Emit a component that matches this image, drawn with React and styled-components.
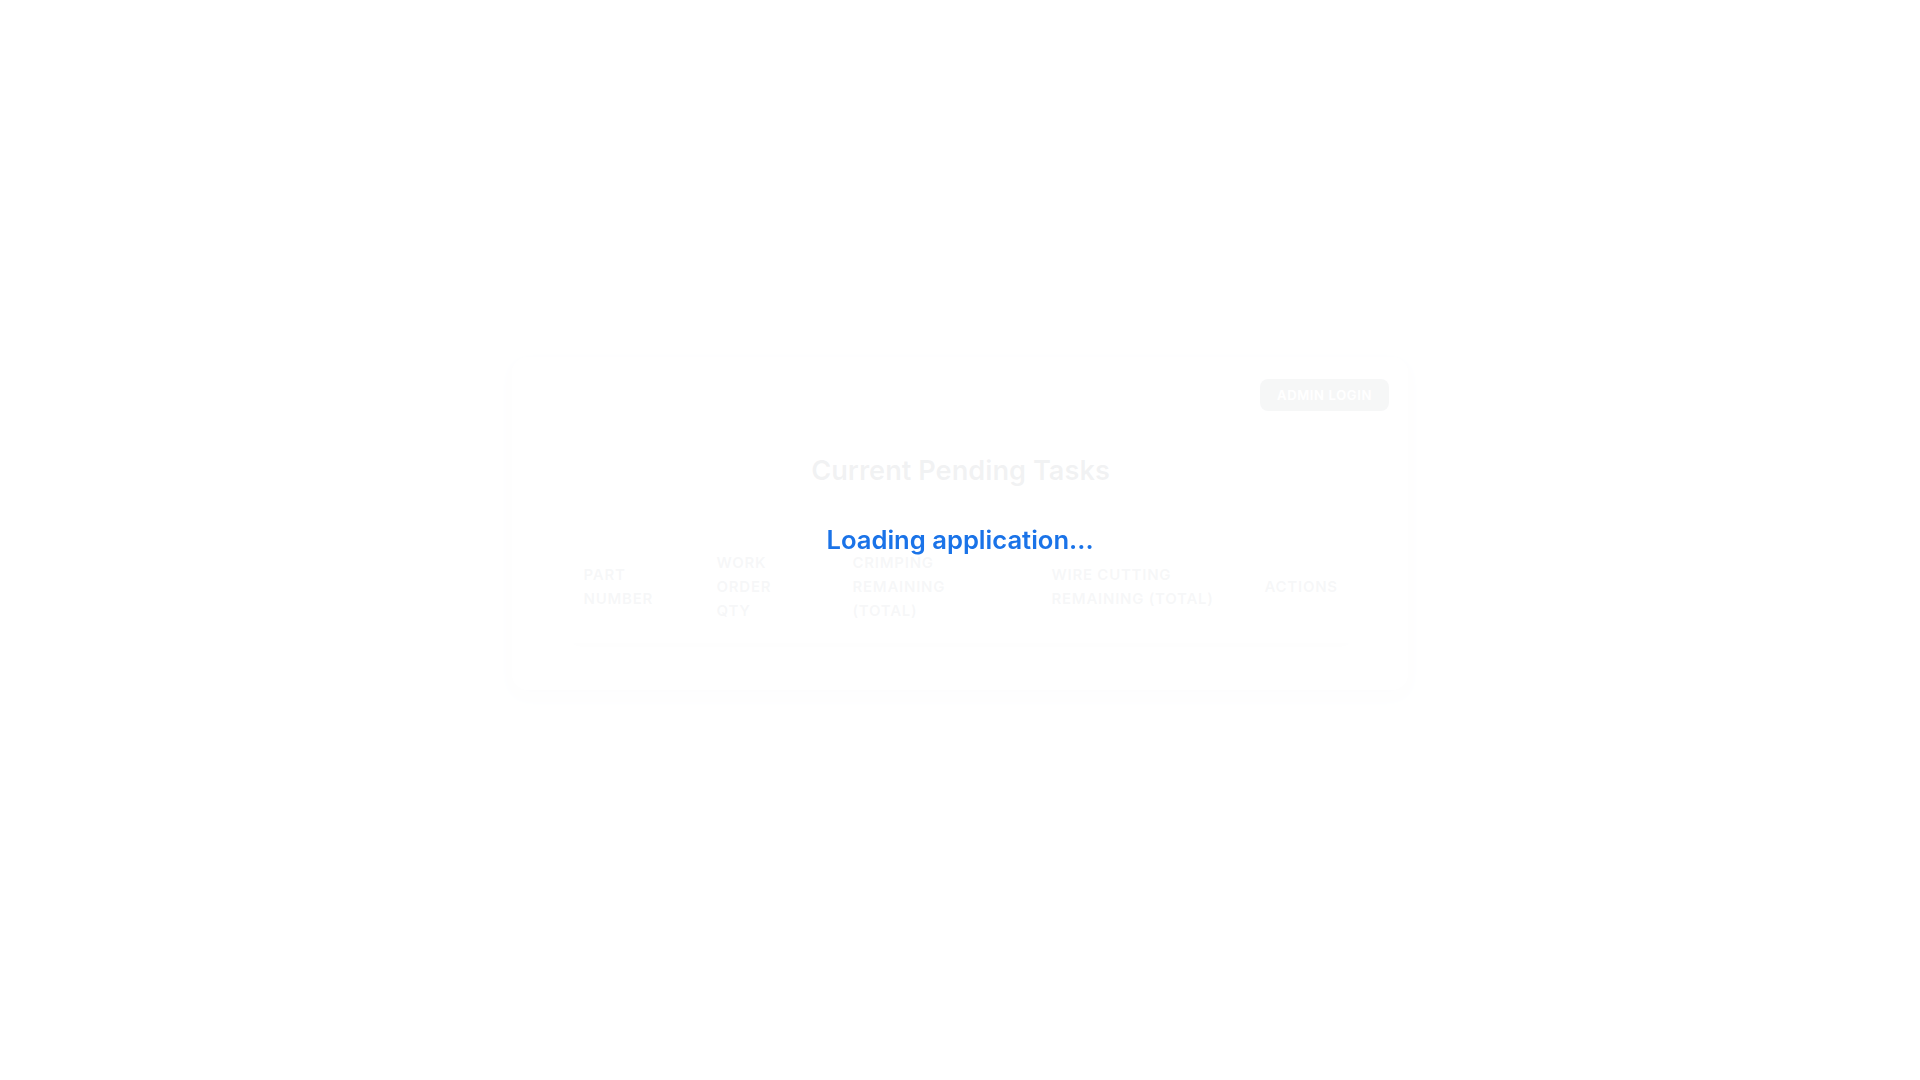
import React from "react";
import styled, { createGlobalStyle } from "styled-components";

const GlobalStyle = createGlobalStyle`
    html, body {
        margin: 0;
        padding: 0;
        background: #f3f4f6;
        font-family: Inter, "Noto Sans", "Liberation Sans", sans-serif;
    }
    * {
        box-sizing: border-box;
    }
`;

const Page = styled.div`
    min-height: 100vh;
    padding: 357px 20px 40px;
`;

const Card = styled.div`
    max-width: 896px;
    margin: 0 auto;
    background: #ffffff;
    border-radius: 16px;
    box-shadow: 0 6px 16px rgba(0, 0, 0, 0.12);
    padding: 22px 19px 45px 20px;
`;

const TopBar = styled.div`
    display: flex;
    justify-content: flex-end;
`;

const AdminButton = styled.button`
    height: 32px;
    padding: 0 17px;
    border: none;
    border-radius: 8px;
    background: #6c757d;
    color: #ffffff;
    font-family: inherit;
    font-size: 13px;
    font-weight: 600;
    letter-spacing: 0.05em;
    text-transform: uppercase;
    cursor: pointer;
`;

const Title = styled.h2`
    margin: 43px 0 47px;
    text-align: center;
    font-size: 27.2px;
    line-height: 34px;
    font-weight: 600;
    color: #1f2937;
`;

const TableWrap = styled.div`
    width: 786px;
    margin: 0 auto;
    border-radius: 12px;
    overflow: hidden;
    background: #ffffff;
    box-shadow: 0 2px 8px rgba(0, 0, 0, 0.12);
`;

const Table = styled.table`
    width: 100%;
    border-collapse: collapse;
    table-layout: fixed;
`;

const HeadCell = styled.th`
    padding: 16px 16px 20px;
    text-align: left;
    vertical-align: middle;
    white-space: nowrap;
    font-size: 15px;
    line-height: 24px;
    font-weight: 600;
    letter-spacing: 0.05em;
    text-transform: uppercase;
    color: #6b7280;
    background: #f9fafb;
    border-bottom: 2px solid #e5e7eb;
`;

const Overlay = styled.div`
    position: fixed;
    inset: 0;
    z-index: 50;
    display: flex;
    align-items: center;
    justify-content: center;
    background: rgba(255, 255, 255, 0.94);
`;

const LoadingText = styled.div`
    font-size: 25.6px;
    line-height: 32px;
    font-weight: 600;
    color: #1a73e8;
`;

const columns = [
    { width: 133, lines: ["Part", "Number"] },
    { width: 136, lines: ["Work", "Order", "Qty"] },
    { width: 199, lines: ["Crimping", "Remaining", "(Total)"] },
    { width: 213, lines: ["Wire Cutting", "Remaining (Total)"] },
    { width: 105, lines: ["Actions"] },
];

const App = () => {
    return (
        <>
            <GlobalStyle />
            <Page>
                <Card>
                    <TopBar>
                        <AdminButton>Admin Login</AdminButton>
                    </TopBar>
                    <Title>Current Pending Tasks</Title>
                    <TableWrap>
                        <Table>
                            <colgroup>
                                {columns.map((c, i) => (
                                    <col key={i} style={{ width: c.width }} />
                                ))}
                            </colgroup>
                            <thead>
                                <tr>
                                    {columns.map((c, i) => (
                                        <HeadCell key={i}>
                                            {c.lines.map((l, j) => (
                                                <React.Fragment key={j}>
                                                    {j > 0 && <br />}
                                                    {l}
                                                </React.Fragment>
                                            ))}
                                        </HeadCell>
                                    ))}
                                </tr>
                            </thead>
                        </Table>
                    </TableWrap>
                </Card>
            </Page>
            <Overlay>
                <LoadingText>Loading application...</LoadingText>
            </Overlay>
        </>
    );
};

export default App;
